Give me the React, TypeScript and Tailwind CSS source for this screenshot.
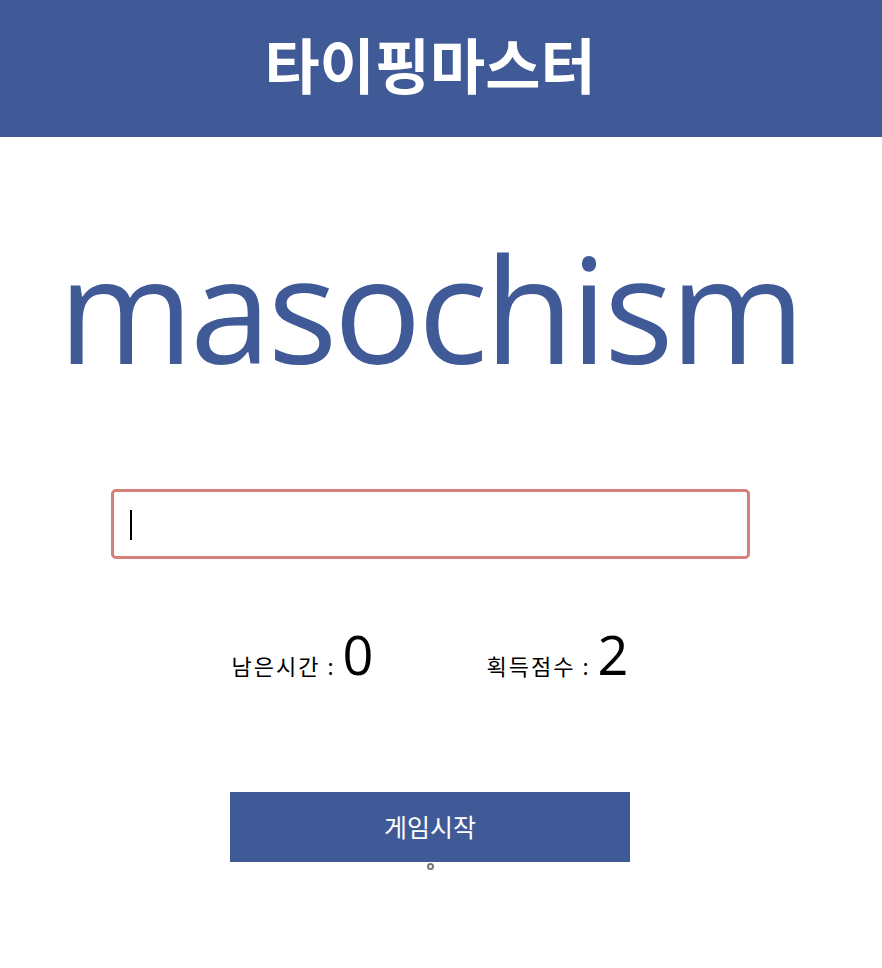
export default function App() {
  return (
    <div className="min-h-[968px] bg-white font-['Noto_Sans_CJK_KR','Noto_Sans',sans-serif]">
      {/* Header */}
      <header className="h-[137px] bg-[#405a97] flex items-center pb-[12px]">
        <div className="w-[860px] text-center">
          <h1 className="text-[60px] font-bold text-white leading-none">타이핑마스터</h1>
        </div>
      </header>

      <main className="w-[860px] flex flex-col items-center">
        {/* Word */}
        <div className="mt-[81px] h-[180px] flex items-center justify-center">
          <span className="font-['Open_Sans','Noto_Sans',sans-serif] text-[146px] leading-none text-[#405a97] tracking-[-3.5px]">
            masochism
          </span>
        </div>

        {/* Input */}
        <div className="relative mt-[91px]">
          <input
            type="text"
            className="block w-[639px] h-[70px] rounded-[5px] border-[3px] border-[#d4817b] px-[17px] text-[30px] text-black outline-none"
          />
          <span className="absolute left-[19px] top-[21px] w-[2px] h-[30px] bg-black" />
        </div>

        {/* Stats */}
        <div className="mt-[68px] flex items-baseline gap-[113px]">
          <div className="flex items-baseline">
            <span className="text-[22px] tracking-[2px] text-black">남은시간 :</span>
            <span className="ml-[7px] text-[54px] leading-none text-black font-['Open_Sans',sans-serif]">0</span>
          </div>
          <div className="flex items-baseline">
            <span className="text-[22px] tracking-[2px] text-black">획득점수 :</span>
            <span className="ml-[7px] text-[54px] leading-none text-black font-['Open_Sans',sans-serif]">2</span>
          </div>
        </div>

        {/* Start button */}
        <button className="mt-[110px] w-[400px] h-[70px] bg-[#405a97] text-white text-[25px]">게임시작</button>
        <div className="mt-[1px] w-[7px] h-[7px] rounded-full border-[2px] border-[#777]" />
      </main>
    </div>
  );
}
